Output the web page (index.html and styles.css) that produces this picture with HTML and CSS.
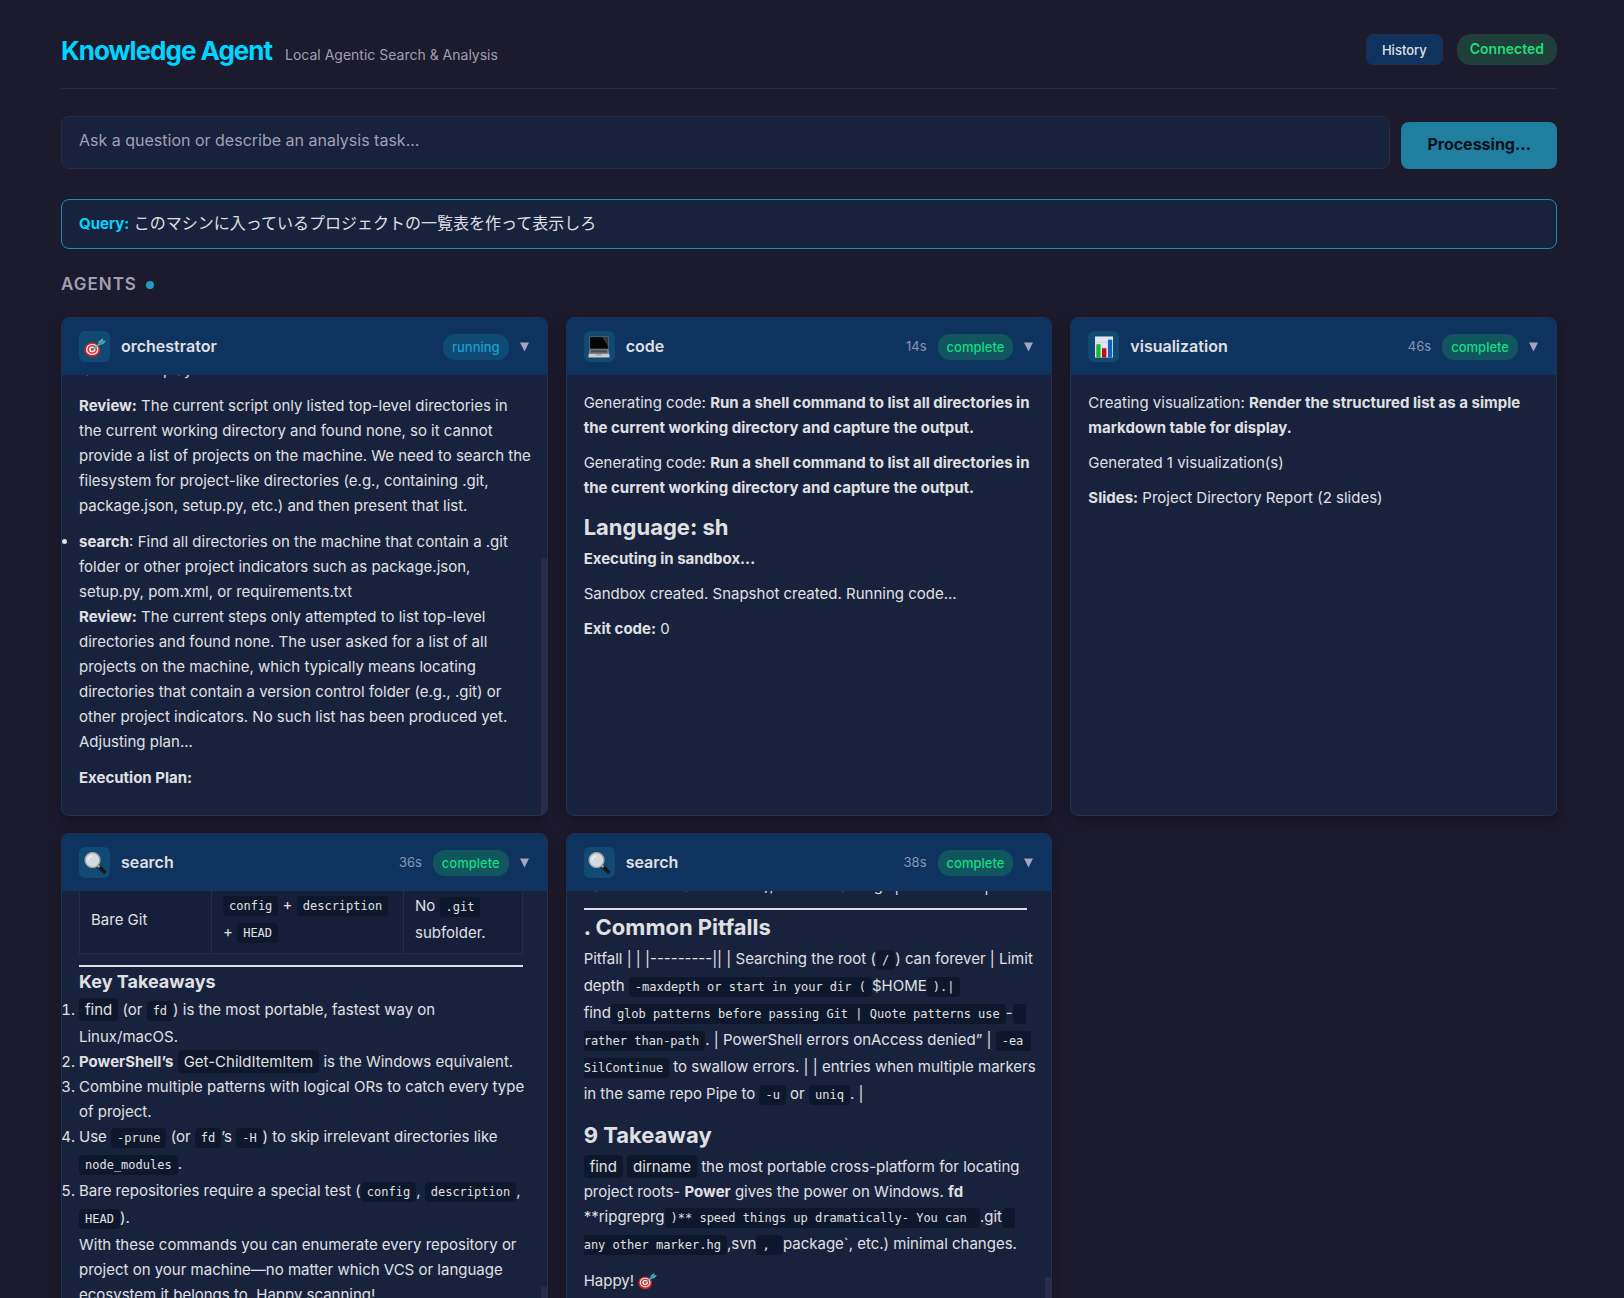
FILE: index.html
```html
<!DOCTYPE html>
<html lang="en">
<head>
<meta charset="utf-8">
<meta name="viewport" content="width=device-width, initial-scale=1">
<title>Knowledge Agent</title>
<link rel="stylesheet" href="styles.css">
</head>
<body>
<svg class="defs" aria-hidden="true">
  <symbol id="dart" viewBox="0 0 24 24">
    <ellipse cx="9" cy="15" rx="8.800" ry="8.200" fill="#c4222b"/>
    <ellipse cx="9" cy="14.600" rx="6.800" ry="6.200" fill="#f1e6e6"/>
    <ellipse cx="9" cy="14.600" rx="5.200" ry="4.700" fill="#d32f2f"/>
    <ellipse cx="9" cy="14.600" rx="3.500" ry="3.200" fill="#f4eaea"/>
    <circle cx="9" cy="14.600" r="1.600" fill="#c4222b"/>
    <path d="M9.500 14.500 18 8" stroke="#4bb5b5" stroke-width="1.8"/>
    <path d="M15.500 9.800 16 6 20.500 2.500 20.800 5 24 5.500 20.500 9Z" fill="#4bb5b5"/>
    <path d="M16.500 8.800 21.500 5" stroke="#1f6f7c" stroke-width="1"/>
  </symbol>
  <symbol id="laptop" viewBox="0 0 24 24">
    <rect x="1.500" y=".5" width="21" height="14" rx=".8" fill="#6b6d70"/>
    <rect x="2.300" y="1.200" width="19.400" height="12.600" fill="#050505"/>
    <path d="M15.500 1.200h6.200v10Z" fill="#38383a"/>
    <path d="M1.500 14.500h21l.7 5.500H.8Z" fill="#7d7f82"/>
    <path d="M3.200 15.500h17.600l.4 2.500H2.800Z" fill="#4a4b4e"/>
    <path d="M.8 19.500h22.400l.4 4H.4Z" fill="#c8cacd"/>
    <path d="M9 19.500h6v1.800H9Z" fill="#a2a4a7"/>
  </symbol>
  <symbol id="chart" viewBox="0 0 24 24">
    <rect x="2.200" y=".5" width="19.600" height="23" fill="#dfe8f2"/>
    <path d="M2.200 7h19.600M2.200 13h19.600M2.200 19h19.600" stroke="#bccbdc" stroke-width=".6"/>
    <rect x="3.600" y="9" width="4.600" height="14.500" fill="#19b52b"/>
    <rect x="9.800" y="13.400" width="4.800" height="10.100" fill="#c00d1c"/>
    <rect x="16.300" y="4" width="4.600" height="19.500" fill="#1560c4"/>
  </symbol>
  <symbol id="lens" viewBox="0 0 24 24">
    <path d="M17 16.500 22 21.500" stroke="#16181c" stroke-width="4" stroke-linecap="round"/>
    <path d="M14.500 14 17 16.500" stroke="#9b9fa4" stroke-width="2.400"/>
    <circle cx="9.300" cy="8.800" r="8.200" fill="#d3dae0" stroke="#9a9c9f" stroke-width="1.400"/>
    <path d="M4.500 9a5 5 0 0 1 5-5" fill="none" stroke="#eef2f5" stroke-width="1.600"/>
  </symbol>
  <symbol id="caret" viewBox="0 0 10 10"><path d="M0 0h10L5 10Z" fill="currentColor"/></symbol>
</svg>
<div class="app">
  <header class="top">
    <div class="brand">
      <h1>Knowledge Agent</h1>
      <span class="tagline">Local Agentic Search &amp; Analysis</span>
    </div>
    <div class="top-actions">
      <button class="history" type="button">History</button>
      <span class="connection">Connected</span>
    </div>
  </header>

  <form class="ask">
    <textarea class="ask-input" rows="1" aria-label="Question" placeholder="Ask a question or describe an analysis task..."></textarea>
    <button class="ask-send" type="button" disabled>Processing...</button>
  </form>

  <section class="query"><strong>Query:</strong> <span lang="ja">このマシンに入っているプロジェクトの一覧表を作って表示しろ</span></section>

  <h2 class="section-title">Agents <span class="dot"></span></h2>

  <main class="agents">
    <article class="card">
      <header class="card-head">
        <span class="icon"><svg><use href="#dart"/></svg></span>
        <h3>orchestrator</h3>
        <span class="status running">running</span>
        <button class="toggle" type="button" aria-label="Collapse"><svg><use href="#caret"/></svg></button>
      </header>
      <div class="card-body tail plan">
        <p>table for display.</p>
        <p><strong>Review:</strong> The current script only listed top-level directories in<br>the current working directory and found none, so it cannot provide a list of projects on the machine. We need to search the filesystem for project-like directories (e.g., containing .git, package.json, setup.py, etc.) and then present that list.</p>
        <ul>
          <li><strong>search</strong>: Find all directories on the machine that contain a .git folder or other project indicators such as package.json, setup.py, pom.xml, or requirements.txt<br><strong>Review:</strong> The current steps only attempted to list top-level directories and found none. The user asked for a list of all projects on the machine, which typically means locating directories that contain a version control folder (e.g., .git) or other project indicators. No such list has been produced yet. Adjusting plan...</li>
        </ul>
        <p><strong>Execution Plan:</strong></p>
        <span class="thumb thumb-long"></span>
      </div>
    </article>

    <article class="card">
      <header class="card-head">
        <span class="icon"><svg><use href="#laptop"/></svg></span>
        <h3>code</h3>
        <span class="time">14s</span>
        <span class="status complete">complete</span>
        <button class="toggle" type="button" aria-label="Collapse"><svg><use href="#caret"/></svg></button>
      </header>
      <div class="card-body">
        <p>Generating code: <strong>Run a shell command to list all directories in the current working directory and capture the output.</strong></p>
        <p>Generating code: <strong>Run a shell command to list all directories in the current working directory and capture the output.</strong></p>
        <h4 class="big"><strong>Language:</strong> sh</h4>
        <p><strong>Executing in sandbox...</strong></p>
        <p>Sandbox created. Snapshot created. Running code...</p>
        <p><strong>Exit code:</strong> 0</p>
      </div>
    </article>

    <article class="card">
      <header class="card-head">
        <span class="icon"><svg><use href="#chart"/></svg></span>
        <h3>visualization</h3>
        <span class="time">46s</span>
        <span class="status complete">complete</span>
        <button class="toggle" type="button" aria-label="Collapse"><svg><use href="#caret"/></svg></button>
      </header>
      <div class="card-body">
        <p>Creating visualization: <strong>Render the structured list as a simple markdown table for display.</strong></p>
        <p>Generated 1 visualization(s)</p>
        <p><strong>Slides:</strong> Project Directory Report (2 slides)</p>
      </div>
    </article>

    <article class="card">
      <header class="card-head">
        <span class="icon"><svg><use href="#lens"/></svg></span>
        <h3>search</h3>
        <span class="time">36s</span>
        <span class="status complete">complete</span>
        <button class="toggle" type="button" aria-label="Collapse"><svg><use href="#caret"/></svg></button>
      </header>
      <div class="card-body tail">
        <table>
          <tbody>
            <tr>
              <td class="col-kind">Bare Git</td>
              <td class="col-marker"><code>config</code> + <code>description</code> + <code>HEAD</code></td>
              <td>No <code>.git</code> subfolder.</td>
            </tr>
          </tbody>
        </table>
        <hr>
        <h4 class="mid">Key Takeaways</h4>
        <ol>
          <li><code class="prose">find</code> (or <code>fd</code>) is the most portable, fastest way on<br>Linux/macOS.</li>
          <li><strong>PowerShell’s</strong> <code class="prose">Get-ChildItemItem</code> is the Windows equivalent.</li>
          <li>Combine multiple patterns with logical ORs to catch every type of project.</li>
          <li>Use <code>-prune</code> (or <code>fd</code>’s <code>-H</code>) to skip irrelevant directories like <code>node_modules</code>.</li>
          <li>Bare repositories require a special test (<code>config</code>, <code>description</code>, <code>HEAD</code>).<br>With these commands you can enumerate every repository or project on your machine—no matter which VCS or language ecosystem it belongs to. Happy scanning!</li>
        </ol>
        <span class="thumb thumb-short"></span>
      </div>
    </article>

    <article class="card">
      <header class="card-head">
        <span class="icon"><svg><use href="#lens"/></svg></span>
        <h3>search</h3>
        <span class="time">38s</span>
        <span class="status complete">complete</span>
        <button class="toggle" type="button" aria-label="Collapse"><svg><use href="#caret"/></svg></button>
      </header>
      <div class="card-body tail">
        <p>name "." -o -name ".svn" );exec dirname g" | Mixed-tool |</p>
        <hr>
        <h4 class="big">. Common Pitfalls</h4>
        <p>Pitfall | | |---------|| | Searching the root (<code>/</code>) can forever | Limit depth <code>-maxdepth or start in your dir (</code>$HOME<code>).|</code><br>find<code>glob patterns before passing Git | Quote patterns use</code>-<code> rather than-path</code>. | PowerShell errors onAccess denied” | <code><span class="keep">-ea</span> SilContinue</code> to swallow errors. | | entries when multiple markers in the same repo Pipe to <code>-u</code> or <code>uniq</code>. |</p>
        <h4 class="big">9 Takeaway</h4>
        <p><code class="prose">find</code> <code class="prose">dirname</code> the most portable cross-platform for locating project roots- <strong>Power</strong> gives the power on Windows. <strong>fd</strong> **ripgreprg<code>)** speed things up dramatically- You can </code>.git<code> any other marker.hg</code>,svn<code>, </code>package`, etc.) minimal changes.</p>
        <p class="closing">Happy! <svg class="emoji"><use href="#dart"/></svg></p>
        <span class="thumb thumb-mid"></span>
      </div>
    </article>
  </main>
</div>
</body>
</html>
```
FILE: styles.css
```css
:root {
  --bg: #1c1a2d;
  --panel: #18223d;
  --head: #0e335f;
  --line: #2a2a4a;
  --text: #e0e0e2;
  --muted: #a0a0b4;
  --accent: #00d4ff;
  --ok: #10de80;
  --code-bg: #0e182c;
}

* { box-sizing: border-box; margin: 0; padding: 0; }

body {
  background: var(--bg);
  color: var(--text);
  font: 15px/25px Inter, "Noto Sans CJK JP", sans-serif;
}

button, textarea { font-family: inherit; }

.defs { display: none; }

.app { padding: 34px 67px 18px 61px; }

.top {
  display: flex;
  align-items: flex-start;
  justify-content: space-between;
  height: 55px;
  border-bottom: 1px solid var(--line);
}

.brand { display: flex; align-items: baseline; gap: 13px; }
.brand h1 { font-size: 26px; line-height: 34px; font-weight: 700; color: var(--accent); letter-spacing: -1px; }
.tagline { font-size: 14px; color: var(--muted); }

.top-actions { display: flex; gap: 14px; }

.history {
  height: 31px;
  padding: 0 15px;
  border: 1px solid var(--line);
  border-radius: 7px;
  background: var(--head);
  color: var(--text);
  font-size: 13px;
  font-weight: 500;
}

.connection {
  height: 31px;
  padding: 0 13px;
  border-radius: 14px;
  background: #1f3f3b;
  color: #20de7a;
  font-size: 14px;
  line-height: 30px;
  font-weight: 600;
}

.ask { display: flex; align-items: flex-end; gap: 11px; margin-top: 27px; }

.ask-input {
  flex: 1;
  height: 53px;
  padding: 11px 17px;
  border: 1px solid var(--line);
  border-radius: 8px;
  background: var(--panel);
  color: var(--text);
  font-size: 16px;
  line-height: 24px;
  resize: none;
  overflow: hidden;
}
.ask-input::placeholder { color: var(--muted); opacity: 1; }

.ask-send {
  height: 47px;
  padding: 0 26px 3px;
  border: 0;
  border-radius: 8px;
  background: #207f9f;
  color: #04101c;
  font-size: 16px;
  font-weight: 700;
}

.query {
  margin-top: 30px;
  height: 50px;
  padding: 11px 17px;
  border: 1px solid #1e8ba6;
  border-radius: 8px;
  background: var(--panel);
  font-size: 16px;
}
.query strong { color: var(--accent); font-size: 15px; }

.section-title {
  display: flex;
  align-items: center;
  gap: 9px;
  margin: 23px 0 20px;
  color: var(--muted);
  font-size: 17px;
  font-weight: 600;
  letter-spacing: 1px;
  text-transform: uppercase;
}
.dot { width: 8px; height: 8px; border-radius: 50%; background: #1e9dbd; }

.agents {
  display: grid;
  grid-template-columns: repeat(3, minmax(0, 1fr));
  grid-auto-rows: 499px;
  gap: 17px 18px;
}

.card {
  display: flex;
  flex-direction: column;
  overflow: hidden;
  border: 1px solid #243052;
  border-radius: 8px;
  background: var(--panel);
  box-shadow: 0 4px 14px rgba(0, 0, 0, .3);
}

.card-head {
  display: flex;
  flex: none;
  align-items: center;
  gap: 11px;
  height: 57px;
  padding: 0 18px 0 17px;
  background: var(--head);
  z-index: 1;
}
.card-head h3 { flex: 1; font-size: 16px; font-weight: 600; }

.icon {
  display: grid;
  place-items: center;
  width: 31px;
  height: 31px;
  border-radius: 6px;
  background: #104a72;
}
.icon svg { width: 22px; height: 22px; }

.time { color: #8795b4; font-size: 13px; }

.status {
  height: 26px;
  padding: 0 9px;
  border-radius: 12px;
  font-size: 13px;
  line-height: 26px;
  font-weight: 500;
}
.status.running { background: #0f4a73; color: #189fce; }
.status.complete { background: #11555f; color: var(--ok); }

.toggle { display: grid; width: 9px; height: 10px; border: 0; background: none; color: #a3a5c0; }
.toggle svg { width: 9px; height: 10px; }

.card-body {
  position: relative;
  display: flex;
  flex: 1;
  flex-direction: column;
  min-height: 0;
  padding: 15px 17px;
}
.card-body > * { flex: none; }
.card-body p, .card-body ul, .card-body ol { margin-bottom: 10px; }

.card-body.tail { justify-content: flex-end; padding: 0 24px 14px 17px; }
.tail p, .tail ul, .tail ol { margin-right: -12px; }
.plan p, .plan ul { margin-bottom: 11px; }

strong { font-weight: 700; }

.big { font-size: 22px; line-height: 34px; margin-bottom: 2px; font-weight: 700; }
.mid { font-size: 18px; line-height: 30px; font-weight: 700; }

hr { border: 0; height: 2px; background: var(--text); }

table { width: 100%; margin-bottom: 11px; border-collapse: collapse; table-layout: fixed; background: #15193580; }
td { padding: 7px 11px; border: 1px solid var(--line); vertical-align: middle; }
.col-kind { width: 132px; }
.col-marker { width: 192px; }

code {
  padding: 3px 6px;
  border-radius: 4px;
  background: var(--code-bg);
  font-family: "DejaVu Sans Mono", "Liberation Mono", monospace;
  font-size: 12px;
  white-space: break-spaces;
}
code.prose { padding: 2px 6px; font-family: inherit; font-size: 15px; }
.keep { white-space: nowrap; }

.emoji { width: 19px; height: 19px; vertical-align: -4px; }
.card-body .closing { margin-bottom: 24px; }

.thumb { position: absolute; right: 0; bottom: 0; width: 6px; background: #2c2a4b; }
.thumb-long { height: 257px; }
.thumb-mid { height: 54px; }
.thumb-short { height: 44px; }
```
